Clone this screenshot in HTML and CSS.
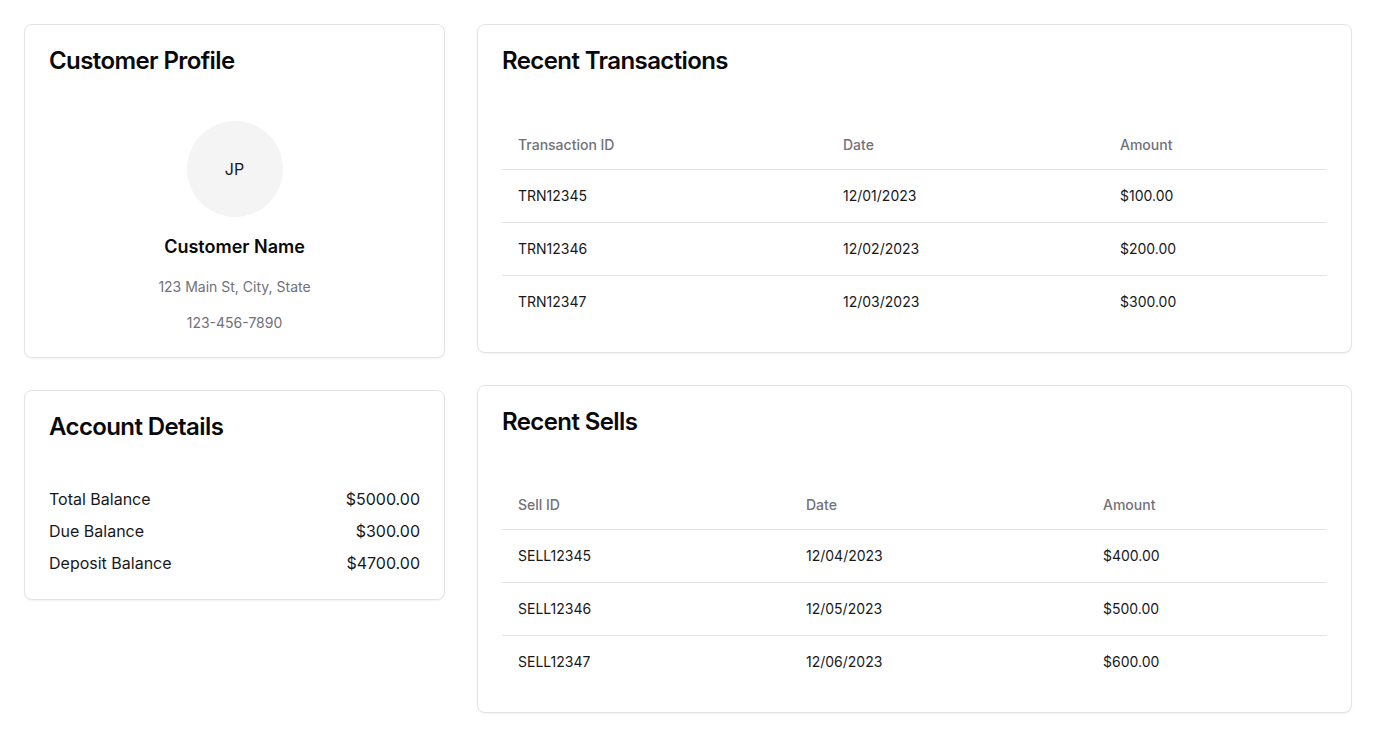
FILE: index.html
```html
<!DOCTYPE html>
<html lang="en">
<head>
<meta charset="utf-8">
<title>Customer</title>
<link rel="stylesheet" href="styles.css">
</head>
<body>
<main class="page">
  <div class="col col-left">
    <section class="card">
      <div class="card-header"><h2 class="card-title">Customer Profile</h2></div>
      <div class="card-content profile">
        <div class="avatar">JP</div>
        <div class="name">Customer Name</div>
        <div class="muted">123 Main St, City, State</div>
        <div class="muted">123-456-7890</div>
      </div>
    </section>
    <section class="card">
      <div class="card-header"><h2 class="card-title">Account Details</h2></div>
      <div class="card-content details">
        <div class="detail-row"><span>Total Balance</span><span>$5000.00</span></div>
        <div class="detail-row"><span>Due Balance</span><span>$300.00</span></div>
        <div class="detail-row"><span>Deposit Balance</span><span>$4700.00</span></div>
      </div>
    </section>
  </div>
  <div class="col col-right">
    <section class="card">
      <div class="card-header"><h2 class="card-title">Recent Transactions</h2></div>
      <div class="card-content">
        <table class="table">
          <colgroup><col class="t1"><col class="t2"><col class="t3"></colgroup>
          <thead><tr><th>Transaction ID</th><th>Date</th><th>Amount</th></tr></thead>
          <tbody>
            <tr><td>TRN12345</td><td>12/01/2023</td><td>$100.00</td></tr>
            <tr><td>TRN12346</td><td>12/02/2023</td><td>$200.00</td></tr>
            <tr><td>TRN12347</td><td>12/03/2023</td><td>$300.00</td></tr>
          </tbody>
        </table>
      </div>
    </section>
    <section class="card">
      <div class="card-header"><h2 class="card-title">Recent Sells</h2></div>
      <div class="card-content">
        <table class="table">
          <colgroup><col class="s1"><col class="s2"><col class="s3"></colgroup>
          <thead><tr><th>Sell ID</th><th>Date</th><th>Amount</th></tr></thead>
          <tbody>
            <tr><td>SELL12345</td><td>12/04/2023</td><td>$400.00</td></tr>
            <tr><td>SELL12346</td><td>12/05/2023</td><td>$500.00</td></tr>
            <tr><td>SELL12347</td><td>12/06/2023</td><td>$600.00</td></tr>
          </tbody>
        </table>
      </div>
    </section>
  </div>
</main>
</body>
</html>
```

FILE: styles.css
```css
* { box-sizing: border-box; }
html, body { margin: 0; padding: 0; background: #ffffff; }
body {
  font-family: Inter, "Liberation Sans", sans-serif;
  color: #09090b;
}
.page {
  display: grid;
  grid-template-columns: 421px 1fr;
  gap: 32px;
  padding: 24px;
  align-items: start;
}
.col { display: flex; flex-direction: column; gap: 32px; }
.card {
  border: 1px solid #e4e4e7;
  border-radius: 8px;
  background: #fff;
  box-shadow: 0 1px 2px rgba(0,0,0,0.05);
}
.card-header { padding: 24px; }
.card-title {
  margin: 0;
  font-size: 24px;
  line-height: 24px;
  font-weight: 600;
  letter-spacing: -0.6px;
}
.card-content { padding: 24px; }
.profile { display: flex; flex-direction: column; align-items: center; gap: 16px; }
.avatar {
  width: 96px; height: 96px;
  border-radius: 50%;
  background: #f4f4f5;
  display: flex; align-items: center; justify-content: center;
  font-size: 16px; color: #18181b;
}
.name { font-size: 18px; line-height: 28px; font-weight: 600; }
.muted { font-size: 14px; line-height: 20px; color: #71717a; }
.details { display: flex; flex-direction: column; gap: 8px; }
.detail-row {
  display: flex; justify-content: space-between;
  font-size: 16px; line-height: 24px; color: #18181b;
}
.table { width: 100%; border-collapse: collapse; font-size: 14px; table-layout: fixed; }
.t1 { width: 325px; } .t2 { width: 277px; }
.s1 { width: 288px; } .s2 { width: 297px; }
.table th {
  height: 48px; padding: 0 16px; text-align: left;
  font-weight: 500; color: #71717a; line-height: 20px;
}
.table thead tr { border-bottom: 1px solid #e4e4e7; }
.table td { padding: 16px; line-height: 20px; color: #18181b; }
.table tbody tr { border-bottom: 1px solid #e4e4e7; }
.table tbody tr:last-child { border-bottom: 0; }
```
